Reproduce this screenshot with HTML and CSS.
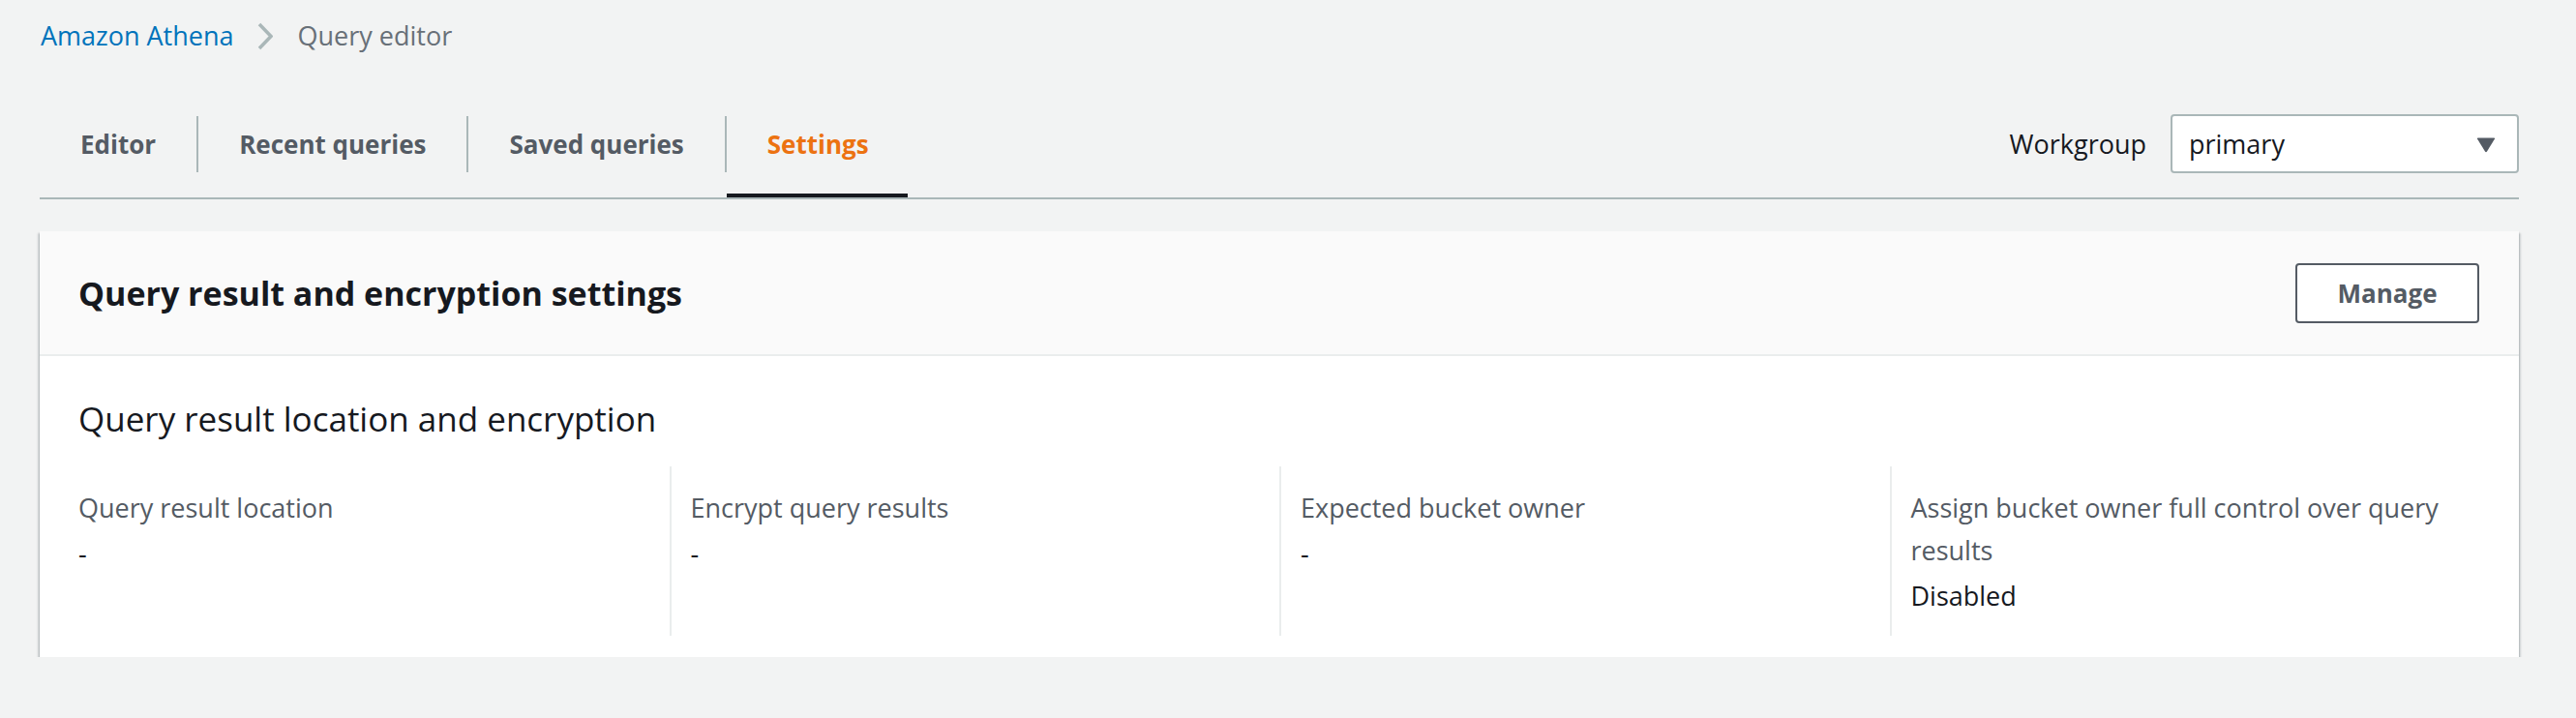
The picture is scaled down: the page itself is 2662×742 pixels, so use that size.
FILE: index.html
```html
<!DOCTYPE html>
<html lang="en">
<head>
<meta charset="utf-8">
<title>Amazon Athena - Settings</title>
<link rel="stylesheet" href="styles.css">
</head>
<body>
<div class="page">
  <nav class="breadcrumbs">
    <a class="crumb-link" href="#">Amazon Athena</a>
    <svg class="crumb-sep" width="16" height="29" viewBox="0 0 16 29"><polyline points="2,2 14,14.5 2,27" fill="none" stroke="#aab7b8" stroke-width="3.5"/></svg>
    <span class="crumb-current">Query editor</span>
  </nav>

  <div class="tabs-header">
    <div class="tabs">
      <span class="tab">Editor</span>
      <span class="tab-sep"></span>
      <span class="tab">Recent queries</span>
      <span class="tab-sep"></span>
      <span class="tab">Saved queries</span>
      <span class="tab-sep"></span>
      <span class="tab tab-active">Settings</span>
    </div>
    <div class="workgroup">
      <span class="wg-label">Workgroup</span>
      <div class="select">
        <span class="select-value">primary</span>
        <svg class="select-caret" width="20" height="16" viewBox="0 0 20 16"><path d="M1 1.5 Q0.5 0.5 2 0.5 H18 Q19.5 0.5 19 1.5 L11 14.5 Q10 16 9 14.5 Z" fill="#545b64"/></svg>
      </div>
    </div>
  </div>

  <section class="panel">
    <header class="panel-header">
      <h2 class="panel-title">Query result and encryption settings</h2>
      <button class="btn">Manage</button>
    </header>
    <div class="panel-body">
      <h3 class="section-title">Query result location and encryption</h3>
      <div class="columns">
        <div class="col">
          <div class="label">Query result location</div>
          <div class="value">-</div>
        </div>
        <div class="col">
          <div class="label">Encrypt query results</div>
          <div class="value">-</div>
        </div>
        <div class="col">
          <div class="label">Expected bucket owner</div>
          <div class="value">-</div>
        </div>
        <div class="col">
          <div class="label">Assign bucket owner full control over query results</div>
          <div class="value">Disabled</div>
        </div>
      </div>
    </div>
  </section>
</div>
</body>
</html>
```

FILE: styles.css
```css
* { box-sizing: border-box; }

html, body {
  margin: 0;
  padding: 0;
  background: #f2f3f3;
}

body {
  font-family: "Open Sans", "Noto Sans", Arial, sans-serif;
  font-size: 27px;
  line-height: 44px;
  color: #16191f;
}

.page {
  padding: 15px 59px 0 41px;
}

/* Breadcrumbs */
.breadcrumbs {
  display: flex;
  align-items: center;
  height: 44px;
  padding-left: 1px;
}

.crumb-link {
  color: #0073bb;
  text-decoration: none;
}

.crumb-sep {
  display: block;
  margin: 0 26px 0 24px;
}

.crumb-current {
  color: #687078;
}

/* Tabs header */
.tabs-header {
  margin-top: 34px;
  height: 113px;
  display: flex;
  align-items: center;
  justify-content: space-between;
  border-bottom: 2px solid #aab7b8;
}

.tabs {
  display: flex;
  align-items: center;
  height: 111px;
}

.tab {
  height: 111px;
  display: flex;
  align-items: center;
  padding: 4px 42px 0 42px;
  font-weight: 700;
  font-size: 26px;
  color: #545b64;
  border-bottom: 4px solid transparent;
}

.tab-active {
  color: #ec7211;
  border-bottom-color: #16191f;
  padding-right: 40px;
}

.tab-sep {
  width: 2px;
  height: 58px;
  background: #aab7b8;
}

.workgroup {
  display: flex;
  align-items: center;
  gap: 25px;
}

.wg-label {
  color: #16191f;
}

.select {
  width: 360px;
  height: 61px;
  background: #fff;
  border: 2px solid #aab7b8;
  border-radius: 4px;
  display: flex;
  align-items: center;
  justify-content: space-between;
  padding: 0 22px 0 17px;
}

.select-caret {
  display: block;
  margin-top: 2px;
}

/* Panel */
.panel {
  margin-top: 33px;
  background: #fff;
  box-shadow: 0 2px 2px 0 rgba(0, 28, 36, 0.4), 2px 2px 2px 0 rgba(0, 28, 36, 0.12), -2px 2px 2px 0 rgba(0, 28, 36, 0.12);
}

.panel-header {
  background: #fafafa;
  border-bottom: 2px solid #eaeded;
  height: 129px;
  display: flex;
  align-items: center;
  justify-content: space-between;
  padding: 0 41px 0 40px;
}

.panel-title {
  margin: 0;
  font-size: 34px;
  line-height: 50px;
  font-weight: 700;
  color: #16191f;
}

.btn {
  font-family: inherit;
  font-size: 26px;
  font-weight: 700;
  color: #545b64;
  background: #fff;
  border: 2px solid #545b64;
  border-radius: 4px;
  width: 190px;
  height: 62px;
  padding: 0;
  margin-top: 1px;
}

.panel-body {
  padding: 40px 40px 22px 40px;
}

.section-title {
  margin: 0;
  font-size: 35px;
  line-height: 50px;
  font-weight: 400;
  color: #16191f;
}

.columns {
  margin: 24px -20px 0 -20px;
  display: grid;
  grid-template-columns: repeat(4, 1fr);
}

.col {
  padding: 21px 0 16px 20px;
}

.col + .col {
  border-left: 2px solid #eaeded;
}

.label {
  color: #545b64;
  line-height: 44px;
}

.value {
  color: #16191f;
  line-height: 50px;
}
```
